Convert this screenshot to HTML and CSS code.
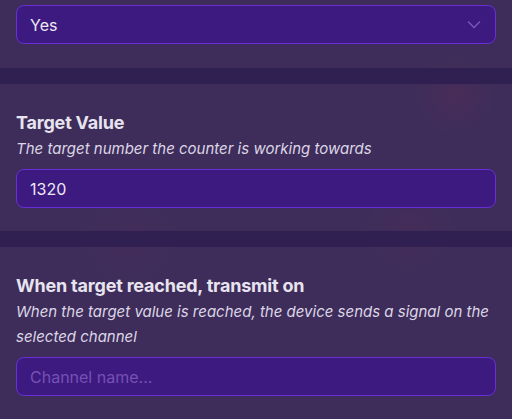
FILE: index.html
```html
<!DOCTYPE html>
<html>
<head>
<meta charset="utf-8">
<link rel="stylesheet" href="styles.css">
</head>
<body>
<div class="panel">
  <section class="section section-top">
    <div class="field select">
      <span class="value">Yes</span>
      <svg class="chev" width="14" height="9" viewBox="0 0 14 9"><path d="M1 1.5 L7 7.5 L13 1.5" fill="none" stroke="#7b58b8" stroke-width="1.3"/></svg>
    </div>
  </section>
  <div class="band"></div>
  <section class="section">
    <h2 class="title">Target Value</h2>
    <p class="desc">The target number the counter is working towards</p>
    <div class="field"><span class="value">1320</span></div>
  </section>
  <div class="band"></div>
  <section class="section">
    <h2 class="title">When target reached, transmit on</h2>
    <p class="desc">When the target value is reached, the device sends a signal on the selected channel</p>
    <div class="field"><span class="placeholder">Channel name...</span></div>
  </section>
</div>
</body>
</html>
```

FILE: styles.css
```css
html, body {
  margin: 0;
  padding: 0;
}
body {
  width: 512px;
  height: 419px;
  overflow: hidden;
  background: #3e2d5a;
  font-family: Inter, "Noto Sans", sans-serif;
  color: #e6e1ee;
}
.panel {
  display: flex;
  flex-direction: column;
  background:
    radial-gradient(circle at 455px 95px, rgba(120, 40, 80, 0.18), rgba(120, 40, 80, 0) 40px),
    radial-gradient(circle at 410px 230px, rgba(120, 40, 80, 0.12), rgba(120, 40, 80, 0) 45px),
    radial-gradient(circle at 130px 240px, rgba(110, 40, 90, 0.1), rgba(110, 40, 90, 0) 50px),
    #3e2d5a;
  height: 419px;
}
.section {
  padding: 27px 16px 23px;
}
.section-top {
  padding-top: 5px;
  padding-bottom: 24px;
}
.band {
  height: 17px;
  background: #301f51;
}
.title {
  margin: 0 0 1px;
  font-size: 18px;
  line-height: 24px;
  font-weight: 700;
  color: #e8e4ef;
  letter-spacing: -0.2px;
}
.desc {
  margin: 0 0 8px;
  font-size: 15px;
  line-height: 25px;
  font-style: italic;
  color: #dcd6e6;
}
.field {
  box-sizing: border-box;
  height: 39px;
  border: 1px solid #6a30d6;
  border-radius: 8px;
  background: #3d1a80;
  display: flex;
  align-items: center;
  justify-content: space-between;
  padding: 0 14px 0 13px;
  font-size: 16px;
}
.value {
  color: #ece8f3;
}
.placeholder {
  color: #7651b3;
}
.chev {
  display: block;
}
```
